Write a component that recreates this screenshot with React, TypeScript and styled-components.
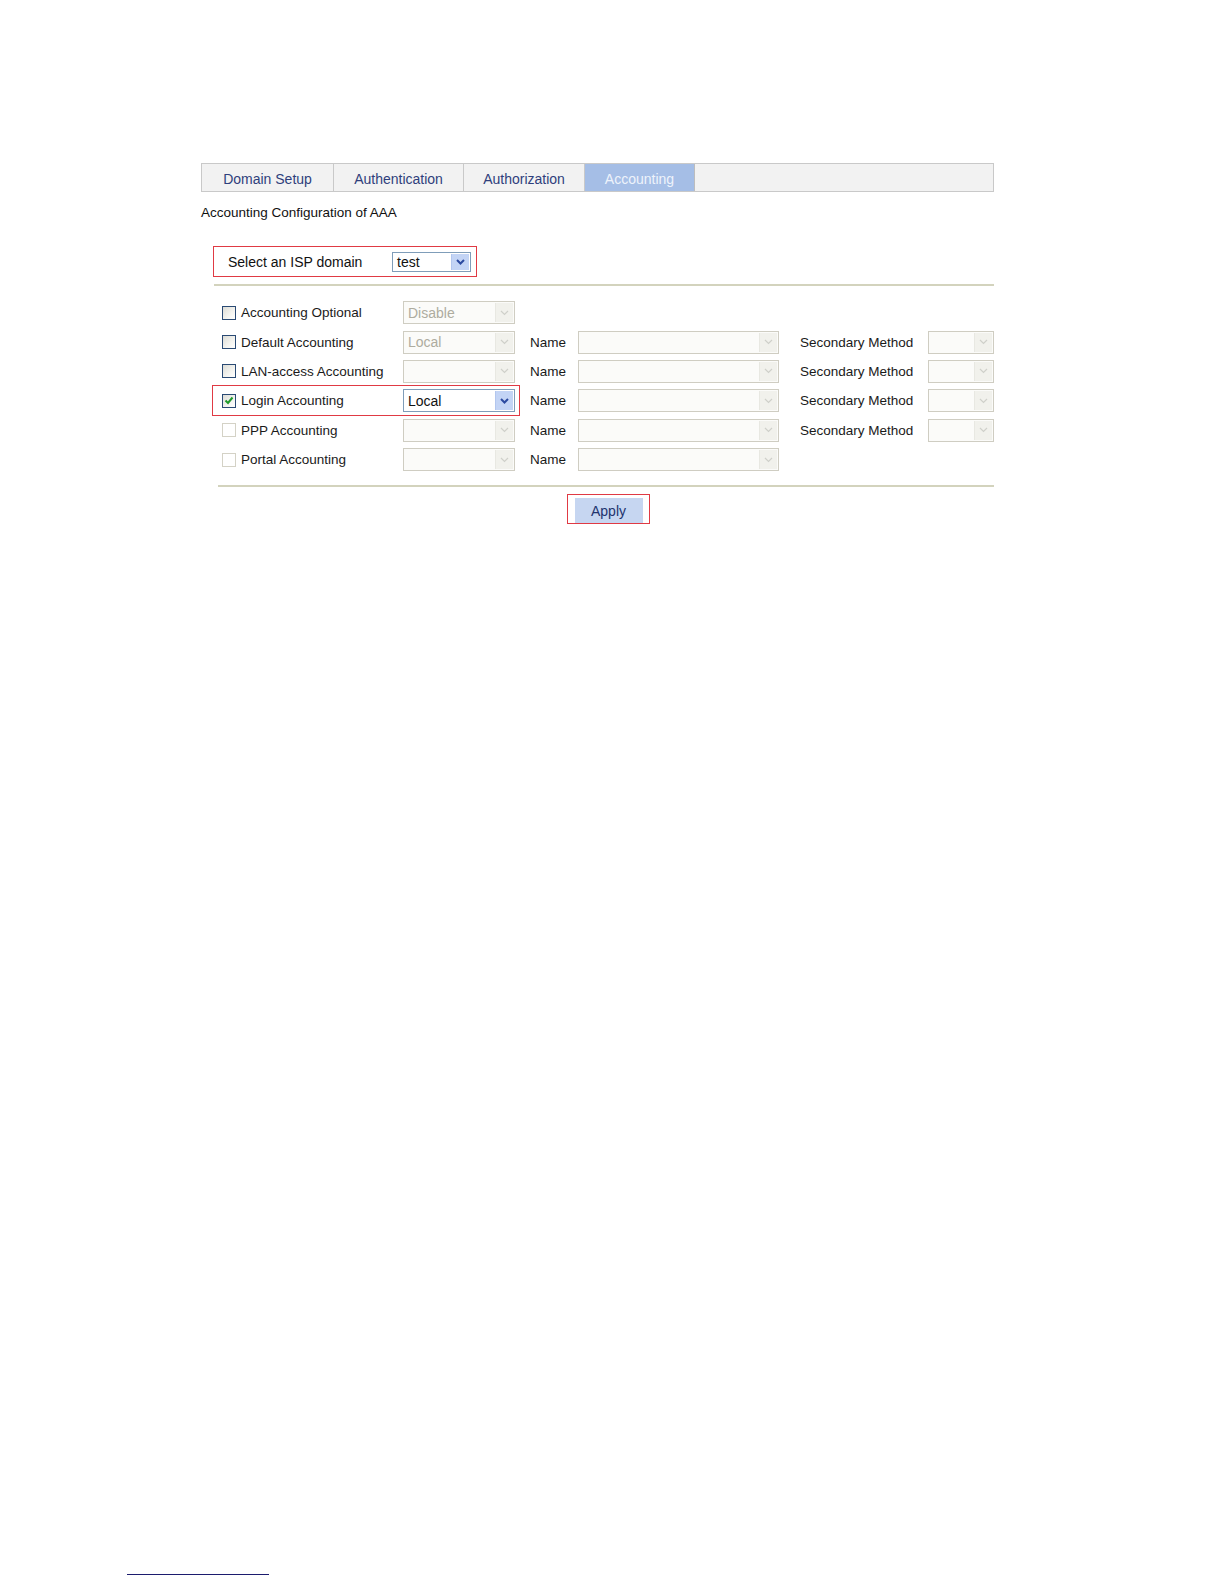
import React from "react";
import styled, { createGlobalStyle, css } from "styled-components";

const Global = createGlobalStyle`
  html, body {
    margin: 0;
    padding: 0;
    background: #fff;
  }
  body {
    font-family: "Liberation Sans", Arial, sans-serif;
    color: #1a1a1a;
  }
`;

const Page = styled.div`
  position: relative;
  width: 1224px;
  height: 1584px;
  padding: 163px 0 0 201px;
  box-sizing: border-box;
`;

const Panel = styled.div`
  width: 793px;
  display: flex;
  flex-direction: column;
`;

const TabBar = styled.div`
  display: flex;
  height: 29px;
  background: #f2f2f2;
  border: 1px solid #c9c9c9;
  box-sizing: border-box;
`;

const Tab = styled.div<{ active?: boolean; w: number }>`
  width: ${({ w }) => w}px;
  display: flex;
  align-items: center;
  justify-content: center;
  padding-top: 3px;
  font-size: 14px;
  color: #2f3f7c;
  border-right: 1px solid #c9c9c9;
  box-sizing: border-box;
  ${({ active }) =>
    active &&
    css`
      background: #a5bee6;
      color: #eef3fb;
      border-right: 1px solid #bdbdbd;
    `}
`;

const Title = styled.div`
  margin-top: 13px;
  font-size: 13.5px;
  line-height: 16px;
  color: #111;
`;

const IspBox = styled.div`
  margin: 25px 0 0 12px;
  width: 264px;
  height: 31px;
  border: 1.5px solid #e03a44;
  box-sizing: border-box;
  display: flex;
  align-items: center;
  padding-left: 14px;
`;

const IspLabel = styled.span`
  width: 164px;
  font-size: 14px;
  color: #111;
`;

const Divider = styled.div<{ left: number; top: number }>`
  margin: ${({ top }) => top}px 0 0 ${({ left }) => left}px;
  height: 2px;
  background: #d3d3bd;
`;

const Rows = styled.div`
  margin: 12px 0 0 20px;
  display: flex;
  flex-direction: column;
`;

const Row = styled.div`
  height: 29.4px;
  display: flex;
  align-items: center;
`;

const Lead = styled.div<{ mark?: boolean }>`
  display: flex;
  align-items: center;
  height: 31px;
  box-sizing: border-box;
  margin: 0 -5px 0 -9px;
  padding: 0 4px 0 8px;
  border: 1.5px solid ${({ mark }) => (mark ? "#e03a44" : "transparent")};
`;

const Check = styled.label`
  width: 182px;
  display: flex;
  align-items: center;
  gap: 5px;
  font-size: 13.5px;
  color: #1a1a1a;
`;

const Box = styled.span<{ off?: boolean }>`
  width: 14px;
  height: 14px;
  margin-left: 1px;
  box-sizing: border-box;
  display: inline-flex;
  align-items: center;
  justify-content: center;
  border: 1px solid ${({ off }) => (off ? "#d4d2c6" : "#2a4a74")};
  background: ${({ off }) =>
    off ? "#fff" : "linear-gradient(135deg, #dcdcd6 0%, #f4f4f0 60%, #fff 100%)"};
`;

const Label = styled.span<{ w: number; ml: number }>`
  width: ${({ w }) => w}px;
  margin-left: ${({ ml }) => ml}px;
  font-size: 13.5px;
  color: #1a1a1a;
`;

const SelectBox = styled.div<{ w: number; h?: number; on?: boolean }>`
  width: ${({ w }) => w}px;
  height: ${({ h }) => h ?? 23}px;
  box-sizing: border-box;
  display: flex;
  align-items: stretch;
  border: 1px solid ${({ on }) => (on ? "#7f9db9" : "#cfcdc2")};
  background: ${({ on }) => (on ? "#fff" : "#fbfbf9")};
`;

const SelectText = styled.span<{ on?: boolean }>`
  flex: 1;
  display: flex;
  align-items: center;
  padding-left: 4px;
  font-size: 14px;
  color: ${({ on }) => (on ? "#111" : "#aeac9f")};
`;

const Arrow = styled.span<{ on?: boolean }>`
  width: 17px;
  display: flex;
  align-items: center;
  justify-content: center;
  margin: 1px;
  background: ${({ on }) => (on ? "#c3d4f5" : "#f1f1ec")};
  border-left: 1px solid ${({ on }) => (on ? "#b2c6ee" : "#e8e8e2")};
`;

const ApplyRow = styled.div`
  margin: 7px 0 0 366px;
  display: flex;
`;

const ApplyMark = styled.div`
  width: 83px;
  height: 30px;
  box-sizing: border-box;
  border: 1.5px solid #e03a44;
  display: flex;
  align-items: flex-end;
  justify-content: center;
`;

const ApplyButton = styled.button`
  width: 68px;
  height: 25px;
  border: none;
  padding: 1px 0 0;
  background: #c6d6f1;
  color: #22336e;
  font-family: "Liberation Sans", Arial, sans-serif;
  font-size: 14px;
`;

const FootLine = styled.div`
  position: absolute;
  left: 127px;
  top: 1574px;
  width: 142px;
  height: 1px;
  background: #1c1c6e;
`;

const Chevron = ({ on }: { on?: boolean }) => (
  <svg width="9" height="6" viewBox="0 0 9 6">
    <polyline
      points="1,1 4.5,4.5 8,1"
      fill="none"
      stroke={on ? "#2c4aa0" : "#cfd0ca"}
      strokeWidth={on ? 2 : 1.2}
    />
  </svg>
);

const Select = ({ w, value, on, h }: { w: number; value?: string; on?: boolean; h?: number }) => (
  <SelectBox w={w} on={on} h={h}>
    <SelectText on={on}>{value}</SelectText>
    <Arrow on={on}>
      <Chevron on={on} />
    </Arrow>
  </SelectBox>
);

type RowData = {
  label: string;
  checked?: boolean;
  off?: boolean;
  mark?: boolean;
  method?: string;
  methodOn?: boolean;
  name?: boolean;
  second?: boolean;
};

const rows: RowData[] = [
  { label: "Accounting Optional", method: "Disable" },
  { label: "Default Accounting", method: "Local", name: true, second: true },
  { label: "LAN-access Accounting", name: true, second: true },
  { label: "Login Accounting", checked: true, mark: true, method: "Local", methodOn: true, name: true, second: true },
  { label: "PPP Accounting", off: true, name: true, second: true },
  { label: "Portal Accounting", off: true, name: true },
];

const tabs = [
  { t: "Domain Setup", w: 132 },
  { t: "Authentication", w: 130 },
  { t: "Authorization", w: 121 },
  { t: "Accounting", w: 110, active: true },
];

export default function App() {
  return (
    <Page>
      <Global />
      <Panel>
        <TabBar>
          {tabs.map((tab) => (
            <Tab key={tab.t} w={tab.w} active={tab.active}>
              {tab.t}
            </Tab>
          ))}
        </TabBar>
        <Title>Accounting Configuration of AAA</Title>
        <IspBox>
          <IspLabel>Select an ISP domain</IspLabel>
          <Select w={79} h={20} value="test" on />
        </IspBox>
        <Divider left={13} top={7} />
        <Rows>
          {rows.map((r) => (
            <Row key={r.label}>
              <Lead mark={r.mark}>
                <Check>
                  <Box off={r.off}>
                    {r.checked && (
                      <svg width="10" height="9" viewBox="0 0 10 9">
                        <polyline points="1.5,4.5 4,7 8.5,1.5" fill="none" stroke="#1f9a2a" strokeWidth="2" />
                      </svg>
                    )}
                  </Box>
                  {r.label}
                </Check>
                <Select w={112} value={r.method} on={r.methodOn} />
              </Lead>
              {r.name && (
                <>
                  <Label w={48} ml={15}>Name</Label>
                  <Select w={201} />
                </>
              )}
              {r.second && (
                <>
                  <Label w={128} ml={21}>Secondary Method</Label>
                  <Select w={66} />
                </>
              )}
            </Row>
          ))}
        </Rows>
        <Divider left={17} top={11} />
        <ApplyRow>
          <ApplyMark>
            <ApplyButton>Apply</ApplyButton>
          </ApplyMark>
        </ApplyRow>
      </Panel>
      <FootLine />
    </Page>
  );
}
